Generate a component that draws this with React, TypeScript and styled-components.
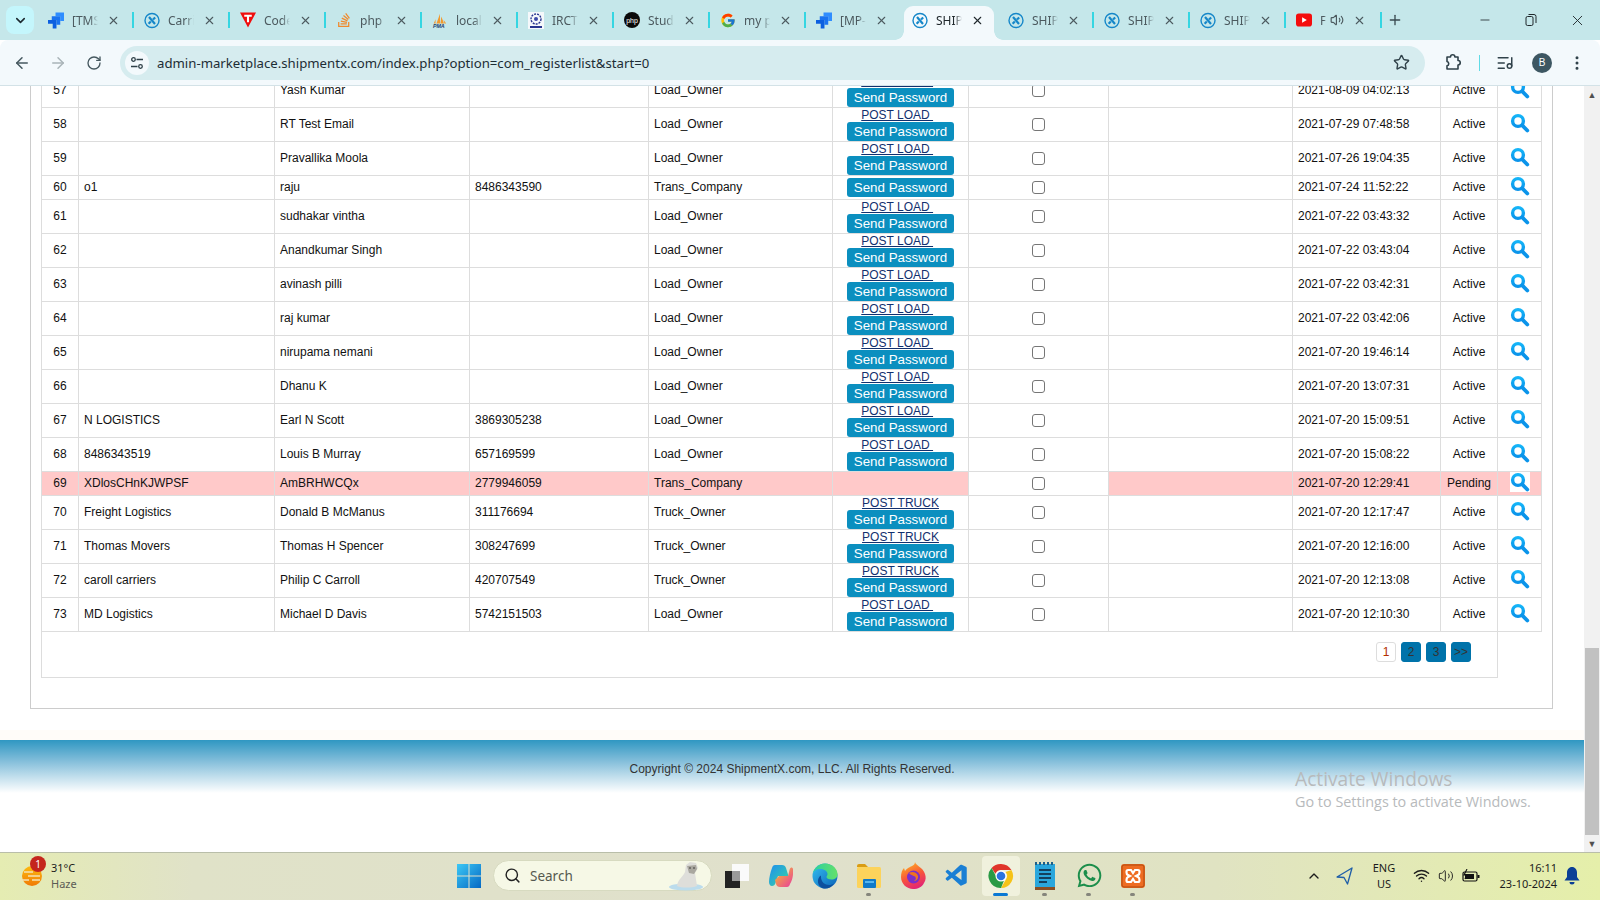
import React from "react";
import styled, { createGlobalStyle } from "styled-components";
import { ArrowLeft, ArrowRight, ChevronDown, ChevronUp, EllipsisVertical, ListMusic, Minus, Plus, RotateCw, Search, Star, Volume2, Wifi, X } from "lucide-react";
import { FaStackOverflow, FaWhatsapp } from "react-icons/fa";
import { FcGoogle } from "react-icons/fc";
import { VscVscode } from "react-icons/vsc";

const GlobalStyle = createGlobalStyle`
  html, body { margin: 0; padding: 0; height: 100%; overflow: hidden; background: #fff; }
  #root { height: 100%; }
`;

// Browser chrome
const Screen = styled.div`
  position: relative;
  width: 1600px;
  height: 900px;
  display: flex;
  flex-direction: column;
  overflow: hidden;
  background: #fff;
  font-family: "Liberation Sans", Arial, sans-serif;
`;
const TabStrip = styled.div`
  height: 40px;
  flex: none;
  display: flex;
  align-items: flex-start;
  background: #c5e7ea;
`;
const TabMenu = styled.div`
  width: 28px;
  height: 28px;
  margin: 6px 3px 0 6px;
  flex: none;
  border-radius: 8px;
  background: #c4f6fc;
  color: #1d2a30;
  display: flex;
  align-items: center;
  justify-content: center;
`;
const TabItem = styled.div<{ $active?: boolean; $noSep?: boolean }>`
  position: relative;
  width: 96px;
  height: 40px;
  flex: none;
  box-sizing: border-box;
  padding: 0 0 0 11px;
  display: flex;
  align-items: center;
  color: ${(p) => (p.$active ? "#20282c" : "#4c5a5f")};
  &::before {
    content: "";
    position: absolute;
    display: ${(p) => (p.$active ? "block" : "none")};
    left: 3px;
    right: 3px;
    top: 6px;
    bottom: 0;
    background: #f3f9fc;
    border-radius: 9px 9px 0 0;
  }
  &::after {
    content: "";
    position: absolute;
    ${(p) =>
      p.$active
        ? `left: -6px; right: -6px; bottom: 0; height: 9px;
           background:
             radial-gradient(circle at 0 0, transparent 8.5px, #f3f9fc 9px) left bottom / 9px 9px no-repeat,
             radial-gradient(circle at 100% 0, transparent 8.5px, #f3f9fc 9px) right bottom / 9px 9px no-repeat;`
        : `right: -1px; top: 12px; width: 2px; height: 16px;
           background: ${p.$noSep ? "transparent" : "#35d6e2"};`}
  }
  & > * { position: relative; z-index: 1; }
`;
const TabIconBox = styled.span`
  width: 16px;
  height: 16px;
  flex: none;
  display: flex;
  align-items: center;
  justify-content: center;
`;
const TabTitle = styled.span<{ $w?: number }>`
  width: ${(p) => p.$w ?? 26}px;
  margin-left: 8px;
  flex: none;
  overflow: hidden;
  white-space: nowrap;
  font-family: "Noto Sans", sans-serif;
  font-size: 12px;
  -webkit-mask-image: linear-gradient(to right, #000 70%, transparent);
  mask-image: linear-gradient(to right, #000 70%, transparent);
`;
const TabClose = styled.span<{ $ml?: number }>`
  margin-left: ${(p) => p.$ml ?? 8}px;
  width: 14px;
  height: 14px;
  flex: none;
  display: flex;
  align-items: center;
  justify-content: center;
`;
const NewTab = styled.div`
  margin: 5px 0 0 4px;
  height: 30px;
  width: 20px;
  display: flex;
  align-items: center;
  justify-content: center;
  color: #3a4a50;
`;
const WindowControls = styled.div`
  margin-left: auto;
  display: flex;
  height: 40px;
  align-items: center;
  color: #20282c;
`;
const WindowButton = styled.div`
  width: 46px;
  display: flex;
  justify-content: center;
`;
const ToolBar = styled.div`
  height: 46px;
  flex: none;
  box-sizing: border-box;
  display: flex;
  align-items: center;
  background: #f3f9fc;
  border-bottom: 1px solid #d3e2e7;
  border-radius: 8px 8px 0 0;
  color: #45585f;
`;
const NavButton = styled.div<{ $dim?: boolean }>`
  width: 36px;
  flex: none;
  display: flex;
  justify-content: center;
  color: ${(p) => (p.$dim ? "#a9b4b8" : "#45585f")};
  &:first-child { margin-left: 4px; }
`;
const Omnibox = styled.div`
  width: 1305px;
  height: 34px;
  margin-left: 8px;
  box-sizing: border-box;
  padding: 0 15px 0 5px;
  flex: none;
  display: flex;
  align-items: center;
  border-radius: 17px;
  background: #d6ecef;
`;
const SiteChip = styled.div`
  width: 24px;
  height: 24px;
  flex: none;
  border-radius: 50%;
  background: #f3f9fc;
  display: flex;
  align-items: center;
  justify-content: center;
`;
const Url = styled.span`
  margin-left: 8px;
  font-family: "Noto Sans", sans-serif;
  font-size: 13.2px;
  color: #1d2d35;
  white-space: nowrap;
`;
const StarSlot = styled.div`
  margin-left: auto;
  display: flex;
  color: #30424a;
`;
const ToolSlot = styled.div<{ $w: number }>`
  width: ${(p) => p.$w}px;
  flex: none;
  display: flex;
  justify-content: center;
  align-items: center;
  color: #30424a;
`;
const ToolDivider = styled.div`
  width: 1px;
  height: 16px;
  margin-left: -2px;
  flex: none;
  background: #5fdbe6;
`;
const Avatar = styled.div`
  width: 20px;
  height: 20px;
  border-radius: 50%;
  background: #3d5762;
  color: #fff;
  font-size: 10px;
  display: flex;
  align-items: center;
  justify-content: center;
`;

// Page viewport
const Viewport = styled.div`
  flex: 1;
  min-height: 0;
  display: flex;
`;
const PageScroll = styled.div`
  width: 1584px;
  flex: none;
  overflow: hidden;
  display: flex;
  flex-direction: column;
`;
const OuterBox = styled.div`
  width: 1523px;
  box-sizing: border-box;
  margin: -13px 0 0 30px;
  border: 1px solid #ccc;
  padding: 0 0 30px 10px;
  flex: none;
`;
const InnerBox = styled.div`
  width: 1457px;
  box-sizing: border-box;
  border: 1px solid #ddd;
  border-top: 0;
`;
const Table = styled.table`
  width: 1500px;
  table-layout: fixed;
  border-collapse: separate;
  border-spacing: 0;
  font-size: 12px;
  color: #111;
`;
const Row = styled.tr<{ $pending?: boolean }>`
  background: ${(p) => (p.$pending ? "#ffc9c9" : "#fff")};
`;
const Cell = styled.td<{ $center?: boolean; $white?: boolean; $h: number }>`
  height: ${(p) => p.$h}px;
  box-sizing: border-box;
  padding: 0 ${(p) => (p.$center ? 0 : "4px")} 2px ${(p) => (p.$center ? 0 : "5px")};
  border-right: 1px solid #ddd;
  border-bottom: 1px solid #ddd;
  text-align: ${(p) => (p.$center ? "center" : "left")};
  vertical-align: middle;
  white-space: nowrap;
  background: ${(p) => (p.$white ? "#fff" : "transparent")};
`;
const FlushCell = styled(Cell)`
  padding: 0;
`;
const PostLink = styled.a`
  display: inline;
  color: #12306e;
  text-decoration: underline;
  text-underline-offset: 1px;
  font-size: 12px;
`;
const PostLine = styled.div`
  height: 14px;
  line-height: 15px;
`;
const SendButton = styled.button`
  display: block;
  width: 107px;
  height: 19px;
  margin: 0 auto;
  padding: 0;
  border: 0;
  border-radius: 3px;
  background: #0b8fbf;
  color: #fff;
  font-family: "Liberation Sans", Arial, sans-serif;
  font-size: 13.33px;
  line-height: 19px;
`;
const Check = styled.input`
  width: 13px;
  height: 13px;
  display: block;
  margin: -1px auto 0;
  appearance: none;
  box-sizing: border-box;
  border: 1px solid #767676;
  border-radius: 3px;
  background: #fff;
`;
const LensBox = styled.span`
  display: block;
  width: 20px;
  height: 20px;
  margin: -4px 0 0 12px;
  background: #fff;
`;
const Pager = styled.div`
  display: flex;
  justify-content: flex-end;
  gap: 5px;
  padding: 10px 26px 15px 0;
`;
const PageLink = styled.span<{ $current?: boolean }>`
  width: 20px;
  height: 20px;
  box-sizing: border-box;
  display: flex;
  align-items: center;
  justify-content: center;
  border-radius: 3px;
  font-size: 12px;
  border: 1px solid ${(p) => (p.$current ? "#ddd" : "#0073aa")};
  background: ${(p) => (p.$current ? "#fff" : "#0073aa")};
  color: ${(p) => (p.$current ? "#b32d00" : "#333")};
`;
const Tint = styled.div`
  height: 10px;
  margin-top: 21px;
  flex: none;
  background: #fffcf9;
`;
const Footer = styled.footer`
  flex: 1;
  box-sizing: border-box;
  padding-top: 22px;
  text-align: center;
  font-size: 12px;
  color: #333;
  background: linear-gradient(to bottom, #2f97c2 0, #7fbcd9 20px, #c6e1ee 38px, #fff 53px);
`;
const Scrollbar = styled.div`
  width: 16px;
  flex: none;
  display: flex;
  flex-direction: column;
  background: #f1f1f1;
  color: #505050;
`;
const ScrollArrow = styled.div`
  height: 17px;
  flex: none;
  display: flex;
  align-items: center;
  justify-content: center;
  font-size: 9px;
`;
const ScrollTrack = styled.div`
  flex: 1;
  display: flex;
  flex-direction: column;
  justify-content: flex-end;
  padding: 0 1px;
`;
const ScrollThumb = styled.div`
  height: 187px;
  background: #c1c1c1;
`;
const Watermark = styled.div`
  position: absolute;
  left: 1295px;
  top: 765px;
  font-family: "Open Sans", sans-serif;
  color: #b7babc;
  pointer-events: none;
`;
const WatermarkTitle = styled.div`
  font-size: 19.2px;
  line-height: 27px;
`;
const WatermarkNote = styled.div`
  font-size: 14.4px;
  line-height: 20px;
`;

// Windows taskbar
const TaskBar = styled.div`
  height: 48px;
  flex: none;
  box-sizing: border-box;
  border-top: 1px solid #b9bea9;
  padding-bottom: 2px;
  display: flex;
  align-items: center;
  position: relative;
  color: #1c1c1c;
  font-family: "Noto Sans", sans-serif;
  background: linear-gradient(to right, #e5ecb2 0, #e0e2c8 12%, #e0e0cc 50%, #e0e3c2 76%, #e5efaa 100%);
`;
const Weather = styled.div`
  width: 447px;
  flex: none;
  box-sizing: border-box;
  padding-left: 20px;
  display: flex;
  align-items: center;
`;
const WeatherIcon = styled.div`
  position: relative;
  width: 22px;
  height: 24px;
  margin-top: 5px;
`;
const WeatherBadge = styled.span`
  position: absolute;
  left: 10px;
  top: -10px;
  width: 16px;
  height: 16px;
  border-radius: 50%;
  background: #c4261d;
  color: #fff;
  font-size: 10px;
  text-align: center;
  line-height: 16px;
`;
const WeatherText = styled.div`
  margin-left: 9px;
  font-size: 11px;
  line-height: 16px;
`;
const Muted = styled.div`
  color: #5b5b55;
`;
const TaskSlot = styled.div<{ $active?: boolean; $w?: number }>`
  position: relative;
  width: ${(p) => p.$w ?? 44}px;
  height: 40px;
  flex: none;
  box-sizing: border-box;
  display: flex;
  align-items: center;
  justify-content: center;
  &::before {
    content: "";
    position: absolute;
    display: ${(p) => (p.$active ? "block" : "none")};
    inset: 0 3px;
    border-radius: 4px;
    background: #f0f1dd;
  }
  & > * { position: relative; }
`;
const RunDot = styled.span<{ $wide?: boolean }>`
  position: absolute !important;
  bottom: 0;
  left: 50%;
  width: ${(p) => (p.$wide ? 15 : 5)}px;
  height: 3px;
  margin-left: ${(p) => (p.$wide ? -8 : -3)}px;
  border-radius: 2px;
  background: ${(p) => (p.$wide ? "#0a78d4" : "#85857c")};
`;
const SearchPill = styled.div`
  width: 219px;
  height: 31px;
  margin: 0 3px 0 2px;
  box-sizing: border-box;
  padding: 0 8px 0 10px;
  flex: none;
  display: flex;
  align-items: center;
  border-radius: 16px;
  background: #f6f8e6;
  border: 1px solid #d7dac0;
  font-size: 13.5px;
  color: #55584f;
`;
const SearchLabel = styled.span`
  margin-left: 9px;
`;
const LeopardBox = styled.span`
  margin-left: auto;
  display: flex;
`;
const Tray = styled.div`
  margin-left: auto;
  padding-right: 13px;
  display: flex;
  align-items: center;
`;
const TraySlot = styled.div<{ $w: number }>`
  width: ${(p) => p.$w}px;
  flex: none;
  display: flex;
  align-items: center;
  justify-content: center;
`;
const TrayText = styled.div<{ $w: number; $right?: boolean }>`
  width: ${(p) => p.$w}px;
  flex: none;
  font-size: 11px;
  line-height: 16px;
  text-align: ${(p) => (p.$right ? "right" : "center")};
`;

// Logos and icons that the packages do not have
const ShipIcon = () => (
  <svg width="17" height="17" viewBox="0 0 16 16">
    <circle cx="8" cy="8" r="7" fill="none" stroke="#1587c9" strokeWidth="1.4" />
    <path d="M5 4.6l6 6.8M11.2 5L9 7M6.8 9l-2.2 2.2" fill="none" stroke="#1587c9" strokeWidth="2.2" />
  </svg>
);
const JiraIcon = () => (
  <svg width="17" height="17" viewBox="0 0 17 17">
    <path d="M8 0h9v9h-4V4H8z" fill="#2f8dff" />
    <path d="M4 4h9v9H9V8H4z" fill="#1a73f0" />
    <path d="M0 8h9v9H5v-5H0z" fill="#0c5fe0" />
  </svg>
);
const CodeIcon = () => (
  <svg width="17" height="16" viewBox="0 0 17 16">
    <path d="M0 0h17L8.5 16z" fill="#f00d0d" />
    <path d="M4.5 2.5h8v2H9.6v6H7.4v-6H4.5z" fill="#fff" />
  </svg>
);
const PmaIcon = () => (
  <svg width="18" height="17" viewBox="0 0 18 17">
    <path d="M5 12L9 1v11zM9.5 12l1-8 3 8zM2 12l2-5v5zM14 12l-1-4 3 4z" fill="#f29a2e" />
    <text x="1" y="17" fontSize="6" fontWeight="700" fontStyle="italic" fill="#1c3f70" fontFamily="Liberation Sans">PMA</text>
  </svg>
);
const IrctcIcon = () => (
  <svg width="16" height="17" viewBox="0 0 16 17">
    <rect width="16" height="17" fill="#f5f8fb" />
    <circle cx="8" cy="7" r="5" fill="none" stroke="#26348f" strokeWidth="1.4" strokeDasharray="2 1" />
    <circle cx="8" cy="7" r="2" fill="#3a49a8" />
    <rect x="2" y="14" width="12" height="2" fill="#26348f" />
  </svg>
);
const PhpIcon = () => (
  <svg width="16" height="16" viewBox="0 0 16 16">
    <circle cx="8" cy="8" r="8" fill="#0a0a0a" />
    <text x="8" y="10.5" fontSize="7" textAnchor="middle" fill="#fff" fontFamily="Liberation Sans">php</text>
  </svg>
);
const YoutubeIcon = () => (
  <svg width="17" height="14" viewBox="0 0 17 14">
    <rect width="17" height="14" rx="3" fill="#f40d0d" />
    <path d="M6.5 4l5 3-5 3z" fill="#fff" />
  </svg>
);
const TuneIcon = () => (
  <svg width="14" height="14" viewBox="0 0 14 14" fill="none" stroke="#2f4048" strokeWidth="1.3">
    <circle cx="3.5" cy="3.5" r="1.8" />
    <path d="M6.5 3.5H13M1 10.5h6.5" />
    <circle cx="10.5" cy="10.5" r="1.8" />
  </svg>
);
const ExtensionIcon = () => (
  <svg width="18" height="18" viewBox="0 0 18 18" fill="none" stroke="#30424a" strokeWidth="1.6" strokeLinejoin="round">
    <path d="M3 3h3.500a2.200 2.200 0 0 1 4.400 0H14v3.500a2.200 2.200 0 0 1 0 4.500V15H3v-3.200a2.200 2.200 0 0 0 0-4.300z" />
  </svg>
);
const RestoreIcon = () => (
  <svg width="12" height="14" viewBox="0 0 12 14" fill="none" stroke="#20282c" strokeWidth="1">
    <rect x="1" y="3.5" width="7" height="9" rx="1.5" />
    <path d="M3.5 1.5H9a2 2 0 0 1 2 2V10" />
  </svg>
);
const LensIcon = () => (
  <svg width="20" height="20" viewBox="0 0 20 20">
    <defs>
      <linearGradient id="lens" x1="0" y1="0" x2="0" y2="1">
        <stop offset="0" stopColor="#14b4f8" />
        <stop offset="1" stopColor="#0b94ea" />
      </linearGradient>
    </defs>
    <circle cx="8" cy="8" r="5.400" fill="#fff" stroke="url(#lens)" strokeWidth="3.400" />
    <path d="M12.500 12.700l4.800 4.800" stroke="#0b94ea" strokeWidth="3.800" strokeLinecap="round" />
  </svg>
);
const SunIcon = () => (
  <svg width="22" height="24" viewBox="0 0 22 24">
    <defs>
      <linearGradient id="sun" x1="0" y1="0" x2="0" y2="1">
        <stop offset="0" stopColor="#fdbb10" />
        <stop offset="1" stopColor="#f07a05" />
      </linearGradient>
    </defs>
    <circle cx="12" cy="10" r="10" fill="url(#sun)" />
    <path d="M4 6h9M8 10h12M0 14h9M12 14h8" stroke="#f3e2b4" strokeWidth="1.6" />
  </svg>
);
const WindowsLogo = () => (
  <svg width="24" height="24" viewBox="0 0 24 24">
    <defs>
      <linearGradient id="win" x1="0" y1="0" x2="1" y2="1">
        <stop offset="0" stopColor="#3cc8f5" />
        <stop offset="1" stopColor="#0568c4" />
      </linearGradient>
    </defs>
    <path d="M0 0h11.5v11.5H0zM12.5 0H24v11.5H12.5zM0 12.5h11.5V24H0zM12.5 12.5H24V24H12.5z" fill="url(#win)" />
  </svg>
);
const LeopardIcon = () => (
  <svg width="34" height="30" viewBox="0 0 34 30">
    <ellipse cx="17" cy="26" rx="17" ry="3.500" fill="#bcdcec" />
    <path d="M8 25c1-7 6-9 8-14l1-7 4-3 6 1 2 5-3 5 2 13c-6 2-15 2-20 0z" fill="#dededa" />
    <path d="M18 5l9-1 1 4-3 5-5-1z" fill="#a9a79f" />
    <circle cx="21" cy="7" r=".8" fill="#333" />
    <circle cx="25" cy="7" r=".8" fill="#333" />
  </svg>
);
const TaskViewIcon = () => (
  <svg width="24" height="24" viewBox="0 0 24 24">
    <rect x="7" y="0" width="17" height="17" fill="#fafafa" />
    <rect x="0" y="7" width="15" height="17" fill="#222" />
    <rect x="7" y="7" width="8" height="10" fill="#9a9a9a" />
  </svg>
);
const CopilotIcon = () => (
  <svg width="24" height="26" viewBox="0 0 24 26">
    <defs>
      <linearGradient id="cpa" x1="0" y1="0" x2="1" y2="1">
        <stop offset="0" stopColor="#1f8ff0" />
        <stop offset="1" stopColor="#38d8a0" />
      </linearGradient>
      <linearGradient id="cpb" x1="0" y1="0" x2="1" y2="1">
        <stop offset="0" stopColor="#f7c52a" />
        <stop offset="1" stopColor="#e93a9f" />
      </linearGradient>
    </defs>
    <path d="M6 2h7c2 0 3.500 1 4 3l2.500 8H9L6.500 20C6 22 4.500 23 3 23 1 23 0 21 0 19c0-4 1.500-10 3-14 .5-2 1.500-3 3-3z" fill="url(#cpa)" />
    <path d="M18 24h-7c-2 0-3.500-1-4-3l-1-4 4-4h9l1.500-6c.5-2 1.500-3 3-2 1 1 .5 3 .5 6 0 3-1.500 8-3 10-.5 2-1.500 3-3 3z" fill="url(#cpb)" />
  </svg>
);
const EdgeIcon = () => (
  <svg width="26" height="26" viewBox="0 0 26 26">
    <defs>
      <linearGradient id="edgea" x1="0" y1="0" x2="1" y2="1">
        <stop offset="0" stopColor="#35c1f1" />
        <stop offset="1" stopColor="#0a60b8" />
      </linearGradient>
      <linearGradient id="edgeb" x1="0" y1="0" x2="1" y2="0">
        <stop offset="0" stopColor="#2ad0a0" />
        <stop offset="1" stopColor="#64e06a" />
      </linearGradient>
    </defs>
    <circle cx="13" cy="13" r="12.500" fill="url(#edgea)" />
    <path d="M13 .5c7 0 12.500 5 12.500 11 0 3-2.500 5-6 5-3 0-5-1-5-2.500 0-1 1-1.500 1-3 0-2.500-3-5-7-5-4 0-7 2-8 5C2 5 7 .5 13 .5z" fill="url(#edgeb)" />
    <path d="M9 14c0 5 4 8 8 8 2 0 4-.7 5-1.500-2 3-5 5-9 5-3 0-6-2-7-6-.5-3 1-6 3-7z" fill="#0d4f9e" />
  </svg>
);
const FolderIcon = () => (
  <svg width="26" height="26" viewBox="0 0 26 26">
    <path d="M1 3a2 2 0 0 1 2-2h6l3 3h-11z" fill="#d99c14" />
    <rect x="1" y="4" width="24" height="21" rx="1.500" fill="#fcd35b" />
    <rect x="7" y="16" width="13" height="9" rx="1" fill="#0f79c8" />
    <rect x="9" y="18" width="9" height="2" fill="#56b6ee" />
  </svg>
);
const FirefoxIcon = () => (
  <svg width="26" height="27" viewBox="0 0 26 27">
    <defs>
      <linearGradient id="ffa" x1="0.300" y1="0" x2="0.700" y2="1">
        <stop offset="0" stopColor="#ffb020" />
        <stop offset="0.500" stopColor="#f8553a" />
        <stop offset="1" stopColor="#e0207c" />
      </linearGradient>
    </defs>
    <path d="M15 0c1 4 8 5 10 12 1 3 1 6-1 9-2 4-6 6-11 6-6 0-12-5-12-12 0-4 1-7 3-9l1 3c1-2 3-3 5-4 2-1 5-2 5-5z" fill="url(#ffa)" />
    <circle cx="13.500" cy="15" r="6.500" fill="#7b2fc9" />
    <path d="M9 11c3-2 8-1 9 3 .5 3-2 5-4 5 2-1 2.500-3 1-4.500-1.500-1-4-1-6-3.500z" fill="#f0721f" />
  </svg>
);
const ChromeIcon = () => (
  <svg width="26" height="26" viewBox="0 0 26 26">
    <path d="M13 1a12 12 0 0 1 10.400 6H13a6 6 0 0 0-5.600 3.800L3.600 5A12 12 0 0 1 13 1z" fill="#e0352b" />
    <path d="M23.400 7A12 12 0 0 1 13 25l5.200-9A6 6 0 0 0 17.500 9z" fill="#f6c318" />
    <path d="M3.600 5l5.400 10a6 6 0 0 0 7 2.500L13 25A12 12 0 0 1 3.600 5z" fill="#2a9a45" />
    <circle cx="13" cy="13" r="5.500" fill="#fff" />
    <circle cx="13" cy="13" r="4.300" fill="#2b74e0" />
  </svg>
);
const NotepadIcon = () => (
  <svg width="22" height="28" viewBox="0 0 22 28">
    <rect x="1" y="2" width="20" height="24" fill="#2aa6dc" />
    <path d="M2 0v3M6 0v3M10 0v3M14 0v3M18 0v3" stroke="#1e5f88" strokeWidth="2" />
    <rect x="1" y="25" width="20" height="3" fill="#8a4e24" />
    <path d="M5 8h12M5 12h12M5 16h12M5 20h8" stroke="#14405e" strokeWidth="1.800" />
  </svg>
);
const XamppIcon = () => (
  <svg width="24" height="24" viewBox="0 0 24 24">
    <rect width="24" height="24" rx="3" fill="#ee6c22" />
    <rect x="1" y="1" width="22" height="22" rx="2" fill="none" stroke="#b04b10" strokeWidth="1" />
    <path d="M7 6h3l2 3 2-3h3c2 0 2 4 0 5l-2 1 2 1c2 1 2 5 0 5h-3l-2-3-2 3H7c-2 0-2-4 0-5l2-1-2-1C5 10 5 6 7 6z" fill="none" stroke="#fff" strokeWidth="2.200" />
  </svg>
);
const NavigateIcon = () => (
  <svg width="18" height="18" viewBox="0 0 18 18" fill="none" stroke="#1f5fa8" strokeWidth="1.300" strokeLinejoin="round">
    <path d="M16 1L1 10l7 .5L11.500 17z" />
  </svg>
);
const BatteryIcon = () => (
  <svg width="18" height="14" viewBox="0 0 18 14">
    <rect x="1" y="3" width="14" height="9" rx="1.500" fill="none" stroke="#111" strokeWidth="1.200" />
    <rect x="3" y="5" width="9" height="5" fill="#111" />
    <rect x="15.500" y="6" width="2" height="3" fill="#111" />
    <path d="M5 0L2 6h2.500L3 10" fill="none" stroke="#111" strokeWidth="1.100" />
  </svg>
);
const BellIcon = () => (
  <svg width="16" height="18" viewBox="0 0 16 18">
    <path d="M8 0c3 0 5 2.500 5 5.500V10l2.500 3.500H.5L3 10V5.500C3 2.500 5 0 8 0z" fill="#0b3f96" />
    <path d="M5.500 15h5a2.500 2.500 0 0 1-5 0z" fill="#0b3f96" />
  </svg>
);

type TabData = { title: string; icon: React.ReactNode; active?: boolean; noSep?: boolean };

const tabs: TabData[] = [
  { title: "[TMS", icon: <JiraIcon /> },
  { title: "Carri", icon: <ShipIcon /> },
  { title: "Code", icon: <CodeIcon /> },
  { title: "php", icon: <FaStackOverflow size={16} color="#f08a2c" /> },
  { title: "local", icon: <PmaIcon /> },
  { title: "IRCTC", icon: <IrctcIcon /> },
  { title: "Stude", icon: <PhpIcon /> },
  { title: "my p", icon: <FcGoogle size={17} /> },
  { title: "[MP-", icon: <JiraIcon />, noSep: true },
  { title: "SHIP", icon: <ShipIcon />, active: true },
  { title: "SHIP", icon: <ShipIcon /> },
  { title: "SHIP", icon: <ShipIcon /> },
  { title: "SHIP", icon: <ShipIcon /> },
];

type Tool = "load" | "truck" | "none";
type RowData = [number, string, string, string, string, Tool, string, string?];

const rows: RowData[] = [
  [57, "", "Yash Kumar", "", "Load_Owner", "load", "2021-08-09 04:02:13"],
  [58, "", "RT Test Email", "", "Load_Owner", "load", "2021-07-29 07:48:58"],
  [59, "", "Pravallika Moola", "", "Load_Owner", "load", "2021-07-26 19:04:35"],
  [60, "o1", "raju", "8486343590", "Trans_Company", "none", "2021-07-24 11:52:22"],
  [61, "", "sudhakar vintha", "", "Load_Owner", "load", "2021-07-22 03:43:32"],
  [62, "", "Anandkumar Singh", "", "Load_Owner", "load", "2021-07-22 03:43:04"],
  [63, "", "avinash pilli", "", "Load_Owner", "load", "2021-07-22 03:42:31"],
  [64, "", "raj kumar", "", "Load_Owner", "load", "2021-07-22 03:42:06"],
  [65, "", "nirupama nemani", "", "Load_Owner", "load", "2021-07-20 19:46:14"],
  [66, "", "Dhanu K", "", "Load_Owner", "load", "2021-07-20 13:07:31"],
  [67, "N LOGISTICS", "Earl N Scott", "3869305238", "Load_Owner", "load", "2021-07-20 15:09:51"],
  [68, "8486343519", "Louis B Murray", "657169599", "Load_Owner", "load", "2021-07-20 15:08:22"],
  [69, "XDlosCHnKJWPSF", "AmBRHWCQx", "2779946059", "Trans_Company", "none", "2021-07-20 12:29:41", "Pending"],
  [70, "Freight Logistics", "Donald B McManus", "311176694", "Truck_Owner", "truck", "2021-07-20 12:17:47"],
  [71, "Thomas Movers", "Thomas H Spencer", "308247699", "Truck_Owner", "truck", "2021-07-20 12:16:00"],
  [72, "caroll carriers", "Philip C Carroll", "420707549", "Truck_Owner", "truck", "2021-07-20 12:13:08"],
  [73, "MD Logistics", "Michael D Davis", "5742151503", "Load_Owner", "load", "2021-07-20 12:10:30"],
];

const colWidths = [37, 196, 195, 179, 184, 136, 140, 184, 148, 57, 44];

const ActionCell = ({ row, h }: { row: RowData; h: number }) => {
  const tool = row[5];
  const pending = row[7] === "Pending";
  return (
    <FlushCell $center $h={h}>
      {tool === "load" && (
        <PostLine>
          <PostLink>POST LOAD&nbsp;</PostLink>&nbsp;&nbsp;
        </PostLine>
      )}
      {tool === "truck" && (
        <PostLine>
          <PostLink>POST TRUCK</PostLink>
        </PostLine>
      )}
      {!pending && <SendButton>Send Password</SendButton>}
    </FlushCell>
  );
};

const UserRow = ({ row }: { row: RowData }) => {
  const [no, company, name, phone, type, tool, date, status] = row;
  const pending = status === "Pending";
  // rows without a POST link are one line high
  const h = tool === "none" ? 24 : 34;
  return (
    <Row $pending={pending}>
      <Cell $center $h={h}>{no}</Cell>
      <Cell $h={h}>{company}</Cell>
      <Cell $h={h}>{name}</Cell>
      <Cell $h={h}>{phone}</Cell>
      <Cell $h={h}>{type}</Cell>
      <ActionCell row={row} h={h} />
      <FlushCell $center $white $h={h}>
        <Check type="checkbox" readOnly />
      </FlushCell>
      <Cell $h={h} />
      <Cell $h={h}>{date}</Cell>
      <Cell $center $h={h}>{status ?? "Active"}</Cell>
      <FlushCell $h={h}>
        <LensBox>
          <LensIcon />
        </LensBox>
      </FlushCell>
    </Row>
  );
};

export default function App() {
  return (
    <Screen>
      <GlobalStyle />
      <TabStrip>
        <TabMenu>
          <ChevronDown size={15} strokeWidth={2.5} />
        </TabMenu>
        {tabs.map((t, i) => (
          <TabItem key={i} $active={t.active} $noSep={t.noSep}>
            <TabIconBox>{t.icon}</TabIconBox>
            <TabTitle>{t.title}</TabTitle>
            <TabClose>
              <X size={13} strokeWidth={2} />
            </TabClose>
          </TabItem>
        ))}
        <TabItem>
          <TabIconBox>
            <YoutubeIcon />
          </TabIconBox>
          <TabTitle $w={6}>F</TabTitle>
          <TabClose $ml={4}>
            <Volume2 size={14} />
          </TabClose>
          <TabClose $ml={8}>
            <X size={13} strokeWidth={2} />
          </TabClose>
        </TabItem>
        <NewTab>
          <Plus size={16} strokeWidth={2} />
        </NewTab>
        <WindowControls>
          <WindowButton>
            <Minus size={14} strokeWidth={1.4} />
          </WindowButton>
          <WindowButton>
            <RestoreIcon />
          </WindowButton>
          <WindowButton>
            <X size={17} strokeWidth={1.3} />
          </WindowButton>
        </WindowControls>
      </TabStrip>
      <ToolBar>
        <NavButton>
          <ArrowLeft size={18} />
        </NavButton>
        <NavButton $dim>
          <ArrowRight size={18} />
        </NavButton>
        <NavButton>
          <RotateCw size={16} />
        </NavButton>
        <Omnibox>
          <SiteChip>
            <TuneIcon />
          </SiteChip>
          <Url>admin-marketplace.shipmentx.com/index.php?option=com_registerlist&amp;start=0</Url>
          <StarSlot>
            <Star size={17} />
          </StarSlot>
        </Omnibox>
        <ToolSlot $w={56}>
          <ExtensionIcon />
        </ToolSlot>
        <ToolDivider />
        <ToolSlot $w={50}>
          <ListMusic size={18} />
        </ToolSlot>
        <ToolSlot $w={24}>
          <Avatar>B</Avatar>
        </ToolSlot>
        <ToolSlot $w={46}>
          <EllipsisVertical size={18} />
        </ToolSlot>
      </ToolBar>
      <Viewport>
        <PageScroll>
          <OuterBox>
            <InnerBox>
              <Table>
                <colgroup>
                  {colWidths.map((w, i) => (
                    <col key={i} width={w} />
                  ))}
                </colgroup>
                <tbody>
                  {rows.map((r) => (
                    <UserRow key={r[0]} row={r} />
                  ))}
                </tbody>
              </Table>
              <Pager>
                <PageLink $current>1</PageLink>
                <PageLink>2</PageLink>
                <PageLink>3</PageLink>
                <PageLink>&gt;&gt;</PageLink>
              </Pager>
            </InnerBox>
          </OuterBox>
          <Tint />
          <Footer>Copyright © 2024 ShipmentX.com, LLC. All Rights Reserved.</Footer>
        </PageScroll>
        <Scrollbar>
          <ScrollArrow>▲</ScrollArrow>
          <ScrollTrack>
            <ScrollThumb />
          </ScrollTrack>
          <ScrollArrow>▼</ScrollArrow>
        </Scrollbar>
      </Viewport>
      <TaskBar>
        <Weather>
          <WeatherIcon>
            <SunIcon />
            <WeatherBadge>1</WeatherBadge>
          </WeatherIcon>
          <WeatherText>
            <div>31°C</div>
            <Muted>Haze</Muted>
          </WeatherText>
        </Weather>
        <TaskSlot>
          <WindowsLogo />
        </TaskSlot>
        <SearchPill>
          <Search size={17} strokeWidth={2} color="#222" />
          <SearchLabel>Search</SearchLabel>
          <LeopardBox>
            <LeopardIcon />
          </LeopardBox>
        </SearchPill>
        <TaskSlot>
          <TaskViewIcon />
        </TaskSlot>
        <TaskSlot>
          <CopilotIcon />
        </TaskSlot>
        <TaskSlot>
          <EdgeIcon />
        </TaskSlot>
        <TaskSlot>
          <FolderIcon />
          <RunDot />
        </TaskSlot>
        <TaskSlot>
          <FirefoxIcon />
        </TaskSlot>
        <TaskSlot>
          <VscVscode size={26} color="#1a7fd4" />
        </TaskSlot>
        <TaskSlot $active>
          <ChromeIcon />
          <RunDot $wide />
        </TaskSlot>
        <TaskSlot>
          <NotepadIcon />
          <RunDot />
        </TaskSlot>
        <TaskSlot>
          <FaWhatsapp size={27} color="#1c8e4b" />
          <RunDot />
        </TaskSlot>
        <TaskSlot>
          <XamppIcon />
          <RunDot />
        </TaskSlot>
        <Tray>
          <TraySlot $w={28}>
            <ChevronUp size={16} strokeWidth={2} />
          </TraySlot>
          <TraySlot $w={34}>
            <NavigateIcon />
          </TraySlot>
          <TrayText $w={44}>
            <div>ENG</div>
            <div>US</div>
          </TrayText>
          <TraySlot $w={30}>
            <Wifi size={17} />
          </TraySlot>
          <TraySlot $w={20}>
            <Volume2 size={16} strokeWidth={1.4} />
          </TraySlot>
          <TraySlot $w={30}>
            <BatteryIcon />
          </TraySlot>
          <TrayText $w={71} $right>
            <div>16:11</div>
            <div>23-10-2024</div>
          </TrayText>
          <TraySlot $w={30}>
            <BellIcon />
          </TraySlot>
        </Tray>
      </TaskBar>
      <Watermark>
        <WatermarkTitle>Activate Windows</WatermarkTitle>
        <WatermarkNote>Go to Settings to activate Windows.</WatermarkNote>
      </Watermark>
    </Screen>
  );
}
